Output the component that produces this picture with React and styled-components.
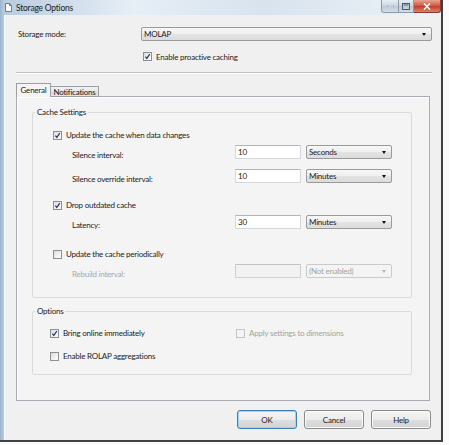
import React from 'react'
import styled, { createGlobalStyle } from 'styled-components'

const GlobalStyle = createGlobalStyle`
  html, body {
    margin: 0;
    padding: 0;
    background: #fbfbfb;
  }
  body {
    font-family: Lato, "Open Sans", sans-serif;
    font-size: 8px;
    letter-spacing: -0.22px;
    color: #1b1b1b;
  }
  * {
    box-sizing: border-box;
  }
`

const Page = styled.div`
  width: 449px;
  height: 445px;
  overflow: hidden;
  background: #fbfbfb;
`

const Window = styled.div`
  width: 443px;
  height: 442px;
  display: flex;
  flex-direction: column;
  border-right: 2px solid #3d4247;
  border-bottom: 2px solid #3d4247;
  background: linear-gradient(
    to right,
    #9ab4cf 0,
    #b8cce0 4px,
    #e6eef6 30%,
    #d8e3ee 60%,
    #edf2f7 100%
  );
`

const TitleBar = styled.div`
  height: 15px;
  display: flex;
  align-items: center;
  padding-left: 5px;
`

const AppIcon = styled.svg`
  width: 7px;
  height: 9px;
  flex: none;
`

const Title = styled.span`
  margin-left: 4px;
  font-size: 8.5px;
  color: #1a1a1a;
`

const CaptionButtons = styled.div`
  margin-left: auto;
  align-self: flex-start;
  display: flex;
`

const CapButton = styled.div`
  width: ${p => p.$w}px;
  height: 13px;
  display: flex;
  align-items: center;
  justify-content: center;
  border: 1px solid ${p => (p.$close ? '#8a3a30' : '#8c9aa8')};
  border-top: none;
  border-left-width: ${p => (p.$first ? 1 : 0)}px;
  border-radius: ${p => (p.$first ? '0 0 0 3px' : p.$close ? '0 0 3px 0' : '0')};
  background: ${p =>
    p.$close
      ? 'linear-gradient(#e8a493, #d2543f 50%, #c23d26 51%, #d9826a)'
      : 'linear-gradient(#e7edf3, #ccd7e2 50%, #bcc9d6 51%, #d4dee8)'};
`

const Client = styled.div`
  flex: 1;
  margin-left: 4px;
  display: flex;
  flex-direction: column;
  padding: 12px 9px 0 11px;
  background: #f0f0f0;
  border-left: 1px solid #f8fbfd;
`

const TopRow = styled.div`
  display: flex;
  align-items: center;
  height: 14px;
`

const TopLabel = styled.span`
  width: 125px;
  padding-left: 2px;
  flex: none;
`

const Combo = styled.div`
  flex: ${p => (p.$w ? 'none' : 1)};
  width: ${p => (p.$w ? `${p.$w}px` : 'auto')};
  height: 14px;
  display: flex;
  align-items: center;
  justify-content: space-between;
  padding: 0 5px 0 2px;
  border: 1px solid ${p => (p.$disabled ? '#cacaca' : '#9a9a9a')};
  border-radius: 2px;
  color: ${p => (p.$disabled ? '#a3a3a3' : '#1b1b1b')};
  background: ${p =>
    p.$disabled
      ? '#f4f4f4'
      : 'linear-gradient(#f7f7f7, #efefef 50%, #e3e3e3 51%, #dcdcdc)'};

  &::after {
    content: '';
    border-left: 2.5px solid transparent;
    border-right: 2.5px solid transparent;
    border-top: 3px solid ${p => (p.$disabled ? '#b5b5b5' : '#111')};
  }
`

const CheckLine = styled.label`
  display: flex;
  align-items: center;
  gap: 4px;
  color: ${p => (p.$disabled ? '#a3a3a3' : '#1b1b1b')};
`

const Box = styled.span`
  width: 9px;
  height: 9px;
  flex: none;
  display: flex;
  align-items: center;
  justify-content: center;
  border: 1px solid ${p => (p.$disabled ? '#c4c4c4' : '#8e8f8f')};
  background: ${p =>
    p.$disabled ? '#f4f4f4' : 'linear-gradient(135deg, #dcdcdc, #f6f6f6 70%)'};
`

const ProactiveRow = styled.div`
  margin-top: 11px;
  height: 9px;
  display: flex;
  align-items: center;
  padding-left: 127px;
`

const Separator = styled.div`
  margin-top: 11px;
  height: 2px;
  border-top: 1px solid #c2c2c2;
  border-bottom: 1px solid #ffffff;
`

const TabStrip = styled.div`
  margin-top: 10px;
  height: 13px;
  display: flex;
  align-items: flex-end;
  margin-bottom: -1px;
`

const Tab = styled.div`
  width: ${p => p.$w}px;
  height: ${p => (p.$active ? 14 : 11)}px;
  display: flex;
  align-items: center;
  justify-content: center;
  padding-bottom: ${p => (p.$active ? 2 : 0)}px;
  border: 1px solid #9b9ea5;
  border-bottom: ${p => (p.$active ? 'none' : '1px solid #9b9ea5')};
  border-left-width: ${p => (p.$active ? 1 : 0)}px;
  white-space: nowrap;
  background: ${p =>
    p.$active ? '#f4f4f4' : 'linear-gradient(#f3f3f3, #e6e6e6 50%, #dadada 51%, #e4e4e4)'};
  z-index: ${p => (p.$active ? 1 : 0)};
`

const Panel = styled.div`
  height: 305px;
  margin-right: 2px;
  padding: 10px 17px 0 15px;
  border: 1px solid #a9acb2;
  background: #f4f4f4;
  box-shadow: inset 1px 1px 0 #ffffff;
`

const Group = styled.fieldset`
  margin: ${p => p.$top || 0}px 0 0;
  padding: 0 0 ${p => p.$bottom}px;
  min-width: 0;
  border: 1px solid #dadada;
  border-radius: 2px;
`

const Legend = styled.legend`
  margin-left: 2px;
  padding: 0 2px;
  line-height: 10px;
  font-size: 8px;
  color: #1b1b1b;
`

const Row = styled.div`
  margin-top: ${p => p.$top}px;
  height: 14px;
  display: flex;
  align-items: center;
  padding-left: ${p => p.$indent}px;
`

const FieldLabel = styled.span`
  width: 163px;
  flex: none;
  margin-top: 6px;
  color: ${p => (p.$disabled ? '#a8a8a8' : '#1b1b1b')};
`

const TextBox = styled.div`
  width: 66px;
  height: 14px;
  flex: none;
  display: flex;
  align-items: center;
  padding-left: 2px;
  margin-right: 5px;
  border: 1px solid ${p => (p.$disabled ? '#cfcfcf' : '#d3d6da')};
  border-top-color: ${p => (p.$disabled ? '#c4c4c4' : '#b1b4b9')};
  background: ${p => (p.$disabled ? '#f2f2f2' : '#ffffff')};
`

const OptionCell = styled.div`
  width: ${p => p.$w}px;
  flex: none;
`

const ButtonRow = styled.div`
  margin-top: 9px;
  margin-right: 1px;
  display: flex;
  justify-content: flex-end;
  gap: 7px;
`

const Button = styled.button`
  width: 60px;
  height: 19px;
  padding: 0;
  font: inherit;
  letter-spacing: inherit;
  color: #1b1b1b;
  border: 1px solid ${p => (p.$focused ? '#3c7fb1' : '#8a8a8a')};
  border-radius: 3px;
  background: linear-gradient(#f4f4f4, #ececec 50%, #dedede 51%, #d3d3d3);
  box-shadow: ${p => (p.$focused ? 'inset 0 0 0 1px #9fd5f3' : 'inset 0 0 0 1px #fbfbfb')};
`

const Check = ({ checked, disabled, children }) => (
  <CheckLine $disabled={disabled}>
    <Box $disabled={disabled}>
      {checked && (
        <svg width="7" height="7" viewBox="0 0 7 7">
          <path d="M1.4 3.6 L2.8 5.4 L5.8 1.2" fill="none" stroke="#24366a" strokeWidth="1.2" />
        </svg>
      )}
    </Box>
    {children}
  </CheckLine>
)

const Field = ({ label, value, unit, disabled, top }) => (
  <Row $top={top} $indent={39}>
    <FieldLabel $disabled={disabled}>{label}</FieldLabel>
    <TextBox $disabled={disabled}>{value}</TextBox>
    <Combo $w={86} $disabled={disabled}>{unit}</Combo>
  </Row>
)

export default function App() {
  return (
    <Page>
      <GlobalStyle />
      <Window>
        <TitleBar>
          <AppIcon viewBox="0 0 7 9">
            <path d="M0.5 0.5 H4.5 L6.5 2.5 V8.5 H0.5 Z" fill="#fdfdfd" stroke="#6f7a86" />
            <path d="M4.5 0.5 V2.5 H6.5" fill="none" stroke="#6f7a86" />
          </AppIcon>
          <Title>Storage Options</Title>
          <CaptionButtons>
            <CapButton $w={18} $first>
              <svg width="7" height="2"><rect width="7" height="2" fill="#eef2f6" stroke="#5a6672" strokeWidth="0.5" /></svg>
            </CapButton>
            <CapButton $w={15}>
              <svg width="8" height="7"><rect x="0.5" y="0.5" width="7" height="6" fill="none" stroke="#4d5966" /><rect x="1.5" y="1.5" width="5" height="1" fill="#4d5966" /></svg>
            </CapButton>
            <CapButton $w={27} $close>
              <svg width="8" height="7" viewBox="0 0 8 7"><path d="M1 0.5 L7 6.5 M7 0.5 L1 6.5" stroke="#ffffff" strokeWidth="1.6" /></svg>
            </CapButton>
          </CaptionButtons>
        </TitleBar>

        <Client>
          <TopRow>
            <TopLabel>Storage mode:</TopLabel>
            <Combo>MOLAP</Combo>
          </TopRow>
          <ProactiveRow>
            <Check checked>Enable proactive caching</Check>
          </ProactiveRow>
          <Separator />

          <TabStrip>
            <Tab $w={35} $active>General</Tab>
            <Tab $w={48}>Notifications</Tab>
          </TabStrip>
          <Panel>
            <Group $bottom={19}>
              <Legend>Cache Settings</Legend>
              <Row $top={11} $indent={20}>
                <Check checked>Update the cache when data changes</Check>
              </Row>
              <Field top={3} label="Silence interval:" value="10" unit="Seconds" />
              <Field top={10} label="Silence override interval:" value="10" unit="Minutes" />
              <Row $top={15} $indent={20}>
                <Check checked>Drop outdated cache</Check>
              </Row>
              <Field top={3} label="Latency:" value="30" unit="Minutes" />
              <Row $top={18} $indent={20}>
                <Check>Update the cache periodically</Check>
              </Row>
              <Field top={3} label="Rebuild interval:" value="" unit="(Not enabled)" disabled />
            </Group>

            <Group $top={8} $bottom={11}>
              <Legend>Options</Legend>
              <Row $top={10} $indent={17}>
                <OptionCell $w={186}>
                  <Check checked>Bring online immediately</Check>
                </OptionCell>
                <Check disabled>Apply settings to dimensions</Check>
              </Row>
              <Row $top={9} $indent={17}>
                <Check>Enable ROLAP aggregations</Check>
              </Row>
            </Group>
          </Panel>

          <ButtonRow>
            <Button $focused>OK</Button>
            <Button>Cancel</Button>
            <Button>Help</Button>
          </ButtonRow>
        </Client>
      </Window>
    </Page>
  )
}
